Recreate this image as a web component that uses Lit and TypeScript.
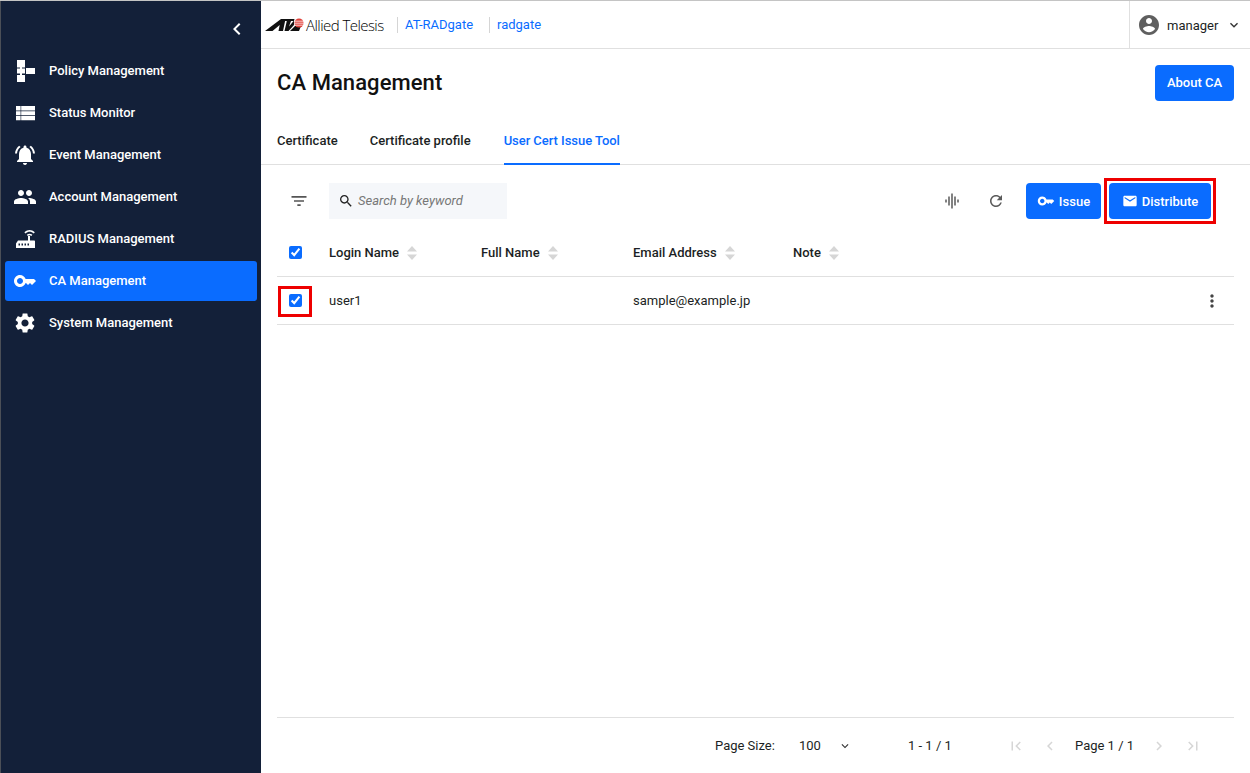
import { LitElement, html, css, svg } from 'lit';
import { customElement } from 'lit/decorators.js';

const P = {
  chevronLeft: 'M15.41 7.41L14 6l-6 6 6 6 1.41-1.41L10.83 12z',
  chevronRight: 'M10 6L8.59 7.41 13.17 12l-4.58 4.59L10 18l6-6z',
  expand: 'M16.59 8.59L12 13.17 7.41 8.59 6 10l6 6 6-6z',
  policy: 'M4 1h8v7.5H4zM7 8.5h2v1h3v5H9v1.500H7v-1.500H4v-5h3zM13 9h9v6h-9zM4 16h8v7H4z',
  status: 'M3 5h4.600v4.600H3zM8.200 5H22v4.600H8.200zM3 10.300h4.600v3.700H3zM8.200 10.300H22v3.700H8.200zM3 14.700h4.600v4.600H3zM8.200 14.700H22v4.600H8.200z',
  bell: 'M7.58 4.08L6.15 2.65C3.75 4.48 2.17 7.3 2.03 10.5h2c.15-2.65 1.51-4.97 3.55-6.42zm12.39 6.42h2c-.15-3.2-1.73-6.02-4.12-7.85l-1.42 1.43c2.02 1.45 3.39 3.77 3.54 6.42zM18 11c0-3.07-1.64-5.64-4.5-6.32V4c0-.83-.67-1.5-1.5-1.5s-1.5.67-1.5 1.5v.68C7.63 5.36 6 7.92 6 11v5l-2 2v1h16v-1l-2-2v-5zm-6 11c.14 0 .27-.01.4-.04.65-.14 1.18-.58 1.44-1.18.1-.24.15-.5.15-.78h-4c.01 1.1.9 2 2.01 2z',
  people: 'M16 11c1.66 0 2.99-1.34 2.99-3S17.66 5 16 5c-1.66 0-3 1.34-3 3s1.34 3 3 3zm-8 0c1.66 0 2.99-1.34 2.99-3S9.66 5 8 5C6.34 5 5 6.34 5 8s1.34 3 3 3zm0 2c-2.33 0-7 1.17-7 3.5V19h14v-2.5c0-2.33-4.67-3.5-7-3.5zm8 0c-.29 0-.62.02-.97.05 1.16.84 1.97 1.97 1.97 3.45V19h6v-2.5c0-2.33-4.67-3.5-7-3.5z',
  router: 'M3 21v-4.500L5 13.500h10V9h2v4.500h4c.6 0 1 .4 1 1V21zM5.500 16.500v2h1.500v-2zM8.500 16.500v2H10v-2zM11.500 16.500v2H13v-2zM14.500 16.500v2H16v-2zM11.400 5.200c3.400-2.800 7-2.800 10.400 0l-1 1.200c-2.900-2.200-5.500-2.200-8.400 0zM13.800 7.800c1.900-1.500 3.700-1.500 5.600 0l-1 1.200c-1.300-1-2.300-1-3.600 0z',
  key: 'M21 10h-8.35C11.83 7.67 9.61 6 7 6c-3.31 0-6 2.69-6 6s2.69 6 6 6c2.61 0 4.83-1.67 5.65-4H13l2 2 2-2 2 2 4-4.04L21 10zM7 15c-1.65 0-3-1.35-3-3s1.35-3 3-3 3 1.35 3 3-1.35 3-3 3z',
  gear: 'M19.14 12.94c.04-.3.06-.61.06-.94 0-.32-.02-.64-.07-.94l2.03-1.58c.18-.14.23-.41.12-.61l-1.92-3.32c-.12-.22-.37-.29-.59-.22l-2.39.96c-.5-.38-1.03-.7-1.62-.94l-.36-2.54c-.04-.24-.24-.41-.48-.41h-3.84c-.24 0-.43.17-.47.41l-.36 2.54c-.59.24-1.13.57-1.62.94l-2.39-.96c-.22-.08-.47 0-.59.22L2.74 8.87c-.12.21-.08.47.12.61l2.03 1.58c-.05.3-.09.63-.09.94s.02.64.07.94l-2.03 1.58c-.18.14-.23.41-.12.61l1.92 3.32c.12.22.37.29.59.22l2.39-.96c.5.38 1.03.7 1.62.94l.36 2.54c.05.24.24.41.48.41h3.84c.24 0 .44-.17.47-.41l.36-2.54c.59-.24 1.13-.56 1.62-.94l2.39.96c.22.08.47 0 .59-.22l1.92-3.32c.12-.22.07-.47-.12-.61l-2.01-1.58zM12 15.6c-1.98 0-3.6-1.62-3.6-3.6s1.62-3.6 3.6-3.6 3.6 1.62 3.6 3.6-1.62 3.6-3.6 3.6z',
  mail: 'M20 4H4c-1.1 0-1.99.9-1.99 2L2 18c0 1.1.9 2 2 2h16c1.1 0 2-.9 2-2V6c0-1.1-.9-2-2-2zm0 4l-8 5-8-5V6l8 5 8-5v2z',
  refresh: 'M17.65 6.35C16.2 4.9 14.21 4 12 4c-4.42 0-7.99 3.58-7.99 8s3.57 8 7.99 8c3.73 0 6.84-2.55 7.73-6h-2.08c-.82 2.33-3.04 4-5.65 4-3.31 0-6-2.69-6-6s2.69-6 6-6c1.66 0 3.14.69 4.22 1.78L13 11h7V4l-2.35 2.35z',
  filter: 'M10 18h4v-2h-4v2zM3 6v2h18V6H3zm3 7h12v-2H6v2z',
  search: 'M15.5 14h-.79l-.28-.27C15.41 12.59 16 11.11 16 9.5 16 5.91 13.09 3 9.5 3S3 5.91 3 9.5 5.91 16 9.5 16c1.61 0 3.09-.59 4.23-1.57l.27.28v.79l5 4.99L20.49 19l-4.99-5zm-6 0C7.01 14 5 11.99 5 9.5S7.01 5 9.5 5 14 7.01 14 9.5 11.99 14 9.5 14z',
  account: 'M12 2C6.48 2 2 6.48 2 12s4.48 10 10 10 10-4.48 10-10S17.52 2 12 2zm0 3c1.66 0 3 1.34 3 3s-1.34 3-3 3-3-1.34-3-3 1.34-3 3-3zm0 14.2c-2.5 0-4.71-1.28-6-3.22.03-1.99 4-3.08 6-3.08 1.99 0 5.97 1.09 6 3.08-1.29 1.94-3.5 3.22-6 3.22z',
  wave: 'M7 18h2V6H7v12zm4 4h2V2h-2v20zm-8-8h2v-4H3v4zm12 4h2V6h-2v12zm4-8v4h2v-4h-2z',
  more: 'M12 8c1.1 0 2-.9 2-2s-.9-2-2-2-2 .9-2 2 .9 2 2 2zm0 2c-1.1 0-2 .9-2 2s.9 2 2 2 2-.9 2-2-.9-2-2-2zm0 6c-1.1 0-2 .9-2 2s.9 2 2 2 2-.9 2-2-.9-2-2-2z',
  first: 'M18.41 16.59L13.82 12l4.59-4.59L17 6l-6 6 6 6zM6 6h2v12H6z',
  last: 'M5.59 7.41L10.18 12l-4.59 4.59L7 18l6-6-6-6zM16 6h2v12h-2z',
};

const icon = (d: string, size = 24, color = 'currentColor') => html`<svg
  width=${size} height=${size} viewBox="0 0 24 24" fill=${color} style="flex:none;display:block">${svg`<path d=${d}></path>`}</svg>`;

const MENU = [
  { label: 'Policy Management', icon: P.policy },
  { label: 'Status Monitor', icon: P.status },
  { label: 'Event Management', icon: P.bell },
  { label: 'Account Management', icon: P.people },
  { label: 'RADIUS Management', icon: P.router },
  { label: 'CA Management', icon: P.key, active: true },
  { label: 'System Management', icon: P.gear },
];

const COLUMNS = [
  { label: 'Login Name', width: 152 },
  { label: 'Full Name', width: 152 },
  { label: 'Email Address', width: 160 },
  { label: 'Note', width: 100 },
];

@customElement('app-root')
export class AppRoot extends LitElement {
  static styles = css`
    :host {
      display: flex;
      height: 773px;
      width: 1250px;
      overflow: hidden;
      box-sizing: border-box;
      border-top: 1px solid #c4c4c4;
      background: #fff;
      color: #1c1f24;
      font-family: Roboto, sans-serif;
      font-size: 13px;
    }
    .side {
      width: 261px;
      flex: none;
      background: #132039;
      border-left: 1px solid #4b4f57;
      color: #fff;
      box-sizing: border-box;
    }
    .collapse {
      height: 50px;
      display: flex;
      justify-content: flex-end;
      align-items: center;
      padding: 6px 12px 0 0;
      box-sizing: border-box;
    }
    .menu {
      display: flex;
      flex-direction: column;
      gap: 2px;
      padding: 0 4px 0 4px;
    }
    .item {
      height: 40px;
      display: flex;
      align-items: center;
      gap: 12px;
      padding-left: 8px;
      border-radius: 3px;
      font-weight: 500;
      font-size: 13px;
    }
    .item .label {
      margin-bottom: 2px;
    }
    .item.active {
      background: #0a6cff;
    }
    .main {
      flex: 1;
      min-width: 0;
      display: flex;
      flex-direction: column;
    }
    .top {
      height: 48px;
      flex: none;
      box-sizing: border-box;
      border-bottom: 1px solid #e0e0e0;
      display: flex;
      align-items: center;
      padding-left: 4px;
    }
    .brand {
      font-family: 'Open Sans', sans-serif;
      font-weight: 300;
      font-size: 15px;
      letter-spacing: -0.55px;
      color: #000;
      margin-left: 1px;
      width: 84px;
      white-space: nowrap;
    }
    .crumb {
      color: #0a6cff;
      border-left: 1px solid #d5d5d5;
      height: 16px;
      line-height: 16px;
      padding-left: 7px;
      margin-top: 1px;
    }
    .crumb.a {
      width: 84px;
      margin-left: 7px;
    }
    .user {
      margin-left: auto;
      height: 47px;
      width: 121px;
      box-sizing: border-box;
      border-left: 1px solid #e0e0e0;
      display: flex;
      align-items: center;
      padding: 1px 0 0 7px;
      gap: 6px;
    }
    .user .name {
      width: 53px;
    }
    .head {
      height: 68px;
      flex: none;
      display: flex;
      justify-content: space-between;
      padding: 16px 16px 0;
      box-sizing: border-box;
    }
    h1 {
      margin: 0;
      font-size: 22px;
      font-weight: 500;
      line-height: 36px;
      letter-spacing: 0.07px;
      color: #111;
    }
    .btn {
      height: 36px;
      display: inline-flex;
      align-items: center;
      justify-content: center;
      gap: 4px;
      background: #0a6cff;
      color: #fff;
      border: none;
      border-radius: 4px;
      font: 500 13px Roboto, sans-serif;
      box-sizing: border-box;
      padding: 0;
    }
    .btn.about {
      width: 79px;
      padding-bottom: 2px;
    }
    .tabs {
      height: 48px;
      flex: none;
      box-sizing: border-box;
      border-bottom: 1px solid #e0e0e0;
      display: flex;
      gap: 32px;
      padding-left: 16px;
    }
    .tab {
      line-height: 48px;
      font-weight: 500;
    }
    .tab.active {
      color: #0a6cff;
      height: 48px;
      margin-left: 1px;
      letter-spacing: -0.05px;
      box-sizing: border-box;
      border-bottom: 2px solid #0a6cff;
    }
    .tools {
      flex: none;
      height: 36px;
      margin-top: 18px;
      padding: 0 39px 0 16px;
      display: flex;
      align-items: center;
    }
    .filter {
      width: 52px;
      padding-left: 12px;
      box-sizing: border-box;
    }
    .search {
      width: 178px;
      height: 36px;
      background: #f5f7fa;
      display: flex;
      align-items: center;
      gap: 4px;
      padding-left: 9px;
      box-sizing: border-box;
      font-style: italic;
      color: #777;
    }
    .search span {
      margin-bottom: 2px;
    }
    .tool-icons {
      margin-left: auto;
      display: flex;
      align-items: center;
      gap: 26px;
      margin-right: 21px;
      color: #5a5a5a;
    }
    .actions {
      display: flex;
      gap: 8px;
    }
    .btn.issue {
      width: 75px;
    }
    .btn.dist {
      width: 102px;
      position: relative;
    }
    .btn.dist::after {
      content: '';
      position: absolute;
      inset: -5px;
      border: 3px solid #ee0000;
    }
    .table {
      flex: 1;
      margin: 0 16px;
    }
    .row {
      display: flex;
      align-items: center;
      border-bottom: 1px solid #e0e0e0;
      box-sizing: border-box;
    }
    .row.h {
      height: 48px;
      margin-top: 10px;
      font-weight: 500;
    }
    .row.b {
      height: 48px;
    }
    .check {
      width: 52px;
      flex: none;
      display: flex;
      padding-left: 12px;
      box-sizing: border-box;
    }
    input {
      margin: 0;
      width: 13px;
      height: 13px;
      accent-color: #0a6cff;
    }
    .marked {
      position: relative;
    }
    .marked::after {
      content: '';
      position: absolute;
      left: 1px;
      top: -8px;
      width: 28px;
      height: 25px;
      border: 3px solid #ee0000;
    }
    .col {
      display: flex;
      align-items: center;
      gap: 8px;
      flex: none;
    }
    .more {
      margin-left: auto;
      margin-right: 12px;
      color: #444;
    }
    .foot {
      flex: none;
      height: 56px;
      margin: 0 16px;
      border-top: 1px solid #e0e0e0;
      display: flex;
      align-items: center;
      box-sizing: border-box;
    }
    .foot .size {
      margin-left: 438px;
      width: 84px;
    }
    .foot .val {
      width: 39px;
    }
    .foot .range {
      margin-left: 56px;
      width: 59px;
    }
    .pager {
      margin-left: 40px;
      display: flex;
      align-items: center;
      color: #d6d6d6;
      gap: 16px;
    }
    .pager span {
      color: #1c1f24;
    }
  `;

  private _sort() {
    return html`<svg width="10" height="14" viewBox="0 0 10 14" style="flex:none;display:block">
      ${svg`<path d="M5 0l5 5.5H0zM0 8.5h10L5 14z" fill="#d6d6d6"></path>`}
    </svg>`;
  }

  private _logo() {
    return html`<svg width="40" height="14" viewBox="0 0 40 14" style="flex:none;display:block">
      ${svg`
        <path d="M0 13L16 1h4.500L18 13h-4.500l1.200-6L7.500 13z" fill="#111"></path>
        <path d="M19.500 13l2.300-10-3.300 0 .5-2h10.500l-.5 2h-3l-2 5.500L29 2.500V7l-5.500 6z" fill="#111"></path>
        <path d="M25 13l5-5h6l-2 5z" fill="#111"></path>
        <circle cx="34" cy="5" r="4.600" fill="#e0413a"></circle>
        <path d="M29 2.700h10v.9H29zM29 4.700h10v.9H29zM29 6.700h10v.9H29z" fill="#fff"></path>
      `}
    </svg>`;
  }

  render() {
    return html`
      <nav class="side">
        <div class="collapse">${icon(P.chevronLeft, 24)}</div>
        <div class="menu">
          ${MENU.map(
            (m) => html`<div class="item ${m.active ? 'active' : ''}">
              ${icon(m.icon, 24)}<span class="label">${m.label}</span>
            </div>`,
          )}
        </div>
      </nav>
      <div class="main">
        <header class="top">
          ${this._logo()}
          <span class="brand">Allied Telesis</span>
          <span class="crumb a">AT-RADgate</span>
          <span class="crumb">radgate</span>
          <div class="user">
            ${icon(P.account, 24, '#5f5f5f')}
            <span class="name">manager</span>
            ${icon(P.expand, 16, '#333')}
          </div>
        </header>
        <div class="head">
          <h1>CA Management</h1>
          <button class="btn about">About CA</button>
        </div>
        <div class="tabs">
          <div class="tab">Certificate</div>
          <div class="tab">Certificate profile</div>
          <div class="tab active">User Cert Issue Tool</div>
        </div>
        <div class="tools">
          <div class="filter">${icon(P.filter, 20, '#555')}</div>
          <div class="search">${icon(P.search, 16, '#222')}<span>Search by keyword</span></div>
          <div class="tool-icons">${icon(P.wave, 18)}${icon(P.refresh, 18)}</div>
          <div class="actions">
            <button class="btn issue">${icon(P.key, 18)}Issue</button>
            <button class="btn dist">${icon(P.mail, 16)}Distribute</button>
          </div>
        </div>
        <div class="table">
          <div class="row h">
            <div class="check"><input type="checkbox" checked /></div>
            ${COLUMNS.map(
              (c) => html`<div class="col" style="width:${c.width}px">${c.label}${this._sort()}</div>`,
            )}
          </div>
          <div class="row b">
            <div class="check marked"><input type="checkbox" checked /></div>
            <div class="col" style="width:152px">user1</div>
            <div class="col" style="width:152px"></div>
            <div class="col" style="width:160px">sample@example.jp</div>
            <div class="more">${icon(P.more, 20)}</div>
          </div>
        </div>
        <footer class="foot">
          <div class="size">Page Size:</div>
          <div class="val">100</div>
          ${icon(P.expand, 14, '#333')}
          <div class="range">1 - 1 / 1</div>
          <div class="pager">
            ${icon(P.first, 18)}${icon(P.chevronLeft, 18)}
            <span>Page 1 / 1</span>
            ${icon(P.chevronRight, 18)}${icon(P.last, 18)}
          </div>
        </footer>
      </div>
    `;
  }
}
